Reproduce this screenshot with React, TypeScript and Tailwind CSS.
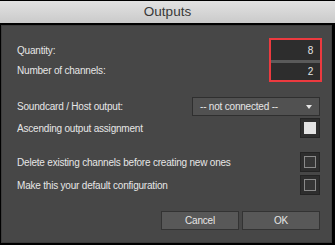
function Checkbox({ checked }: { checked?: boolean }) {
  return (
    <div className="w-[20px] h-[20px] bg-[#2e2e2e] border border-[#242424] flex items-center justify-center">
      <div
        className={`w-[12px] h-[12px] ${
          checked ? 'bg-[#e2e2e2]' : 'border border-[#8a8a8a] bg-[#363636]'
        }`}
      />
    </div>
  );
}

export default function App() {
  const rows = [
    { label: 'Delete existing channels before creating new ones' },
    { label: 'Make this your default configuration' },
  ];

  return (
    <div
      className="w-[335px] h-[245px] bg-black flex flex-col text-[10px] tracking-[-0.2px] text-[#e6e6e6]"
      style={{ fontFamily: '"Liberation Sans", Arial, sans-serif' }}
    >
      <div className="mt-[1px] h-[22px] bg-gradient-to-b from-[#e2e2e2] to-[#cacaca] flex items-center justify-center text-[13.5px] tracking-normal text-[#383838]">
        Outputs
      </div>

      <div className="mt-[2px] flex-1 mb-[2px] ml-[1px] mr-[3px] bg-[#474747] border border-[#3c3c3c] pl-[15px] pr-[11px] flex flex-col">
        <div className="flex mt-[12px]">
          <div className="flex flex-col justify-around flex-1 py-[2px]">
            <span>Quantity:</span>
            <span>Number of channels:</span>
          </div>
          <div className="w-[53px] h-[44px] -mr-[2px] border-2 border-[#ec3a3f] flex flex-col">
            <div className="h-[20px] bg-[#2d2d2d] flex items-center justify-end pr-[7px]">8</div>
            <div className="h-[3px] bg-[#5a5a5a]" />
            <div className="flex-1 bg-[#2d2d2d] flex items-center justify-end pr-[7px]">2</div>
          </div>
        </div>

        <div className="flex items-center justify-between mt-[15px]">
          <span>Soundcard / Host output:</span>
          <div className="w-[128px] h-[19px] bg-[#515151] border border-[#2f2f2f] flex items-center justify-between pl-[7px] pr-[7px]">
            <span>-- not connected --</span>
            <div className="w-0 h-0 border-l-[3.5px] border-r-[3.5px] border-t-[4px] border-l-transparent border-r-transparent border-t-[#e6e6e6] mt-[1px]" />
          </div>
        </div>

        <div className="flex items-center justify-between mt-[2px]">
          <span>Ascending output assignment</span>
          <Checkbox checked />
        </div>

        <div className="flex flex-col gap-[3px] mt-[14px]">
          {rows.map((r) => (
            <div key={r.label} className="flex items-center justify-between">
              <span>{r.label}</span>
              <Checkbox />
            </div>
          ))}
        </div>

        <div className="flex justify-end gap-[3px] mt-[16px]">
          <button className="w-[78px] h-[19px] bg-[#585858] border border-[#333] text-[#e6e6e6]">Cancel</button>
          <button className="w-[78px] h-[19px] bg-[#585858] border border-[#333] text-[#e6e6e6]">OK</button>
        </div>
      </div>
    </div>
  );
}
